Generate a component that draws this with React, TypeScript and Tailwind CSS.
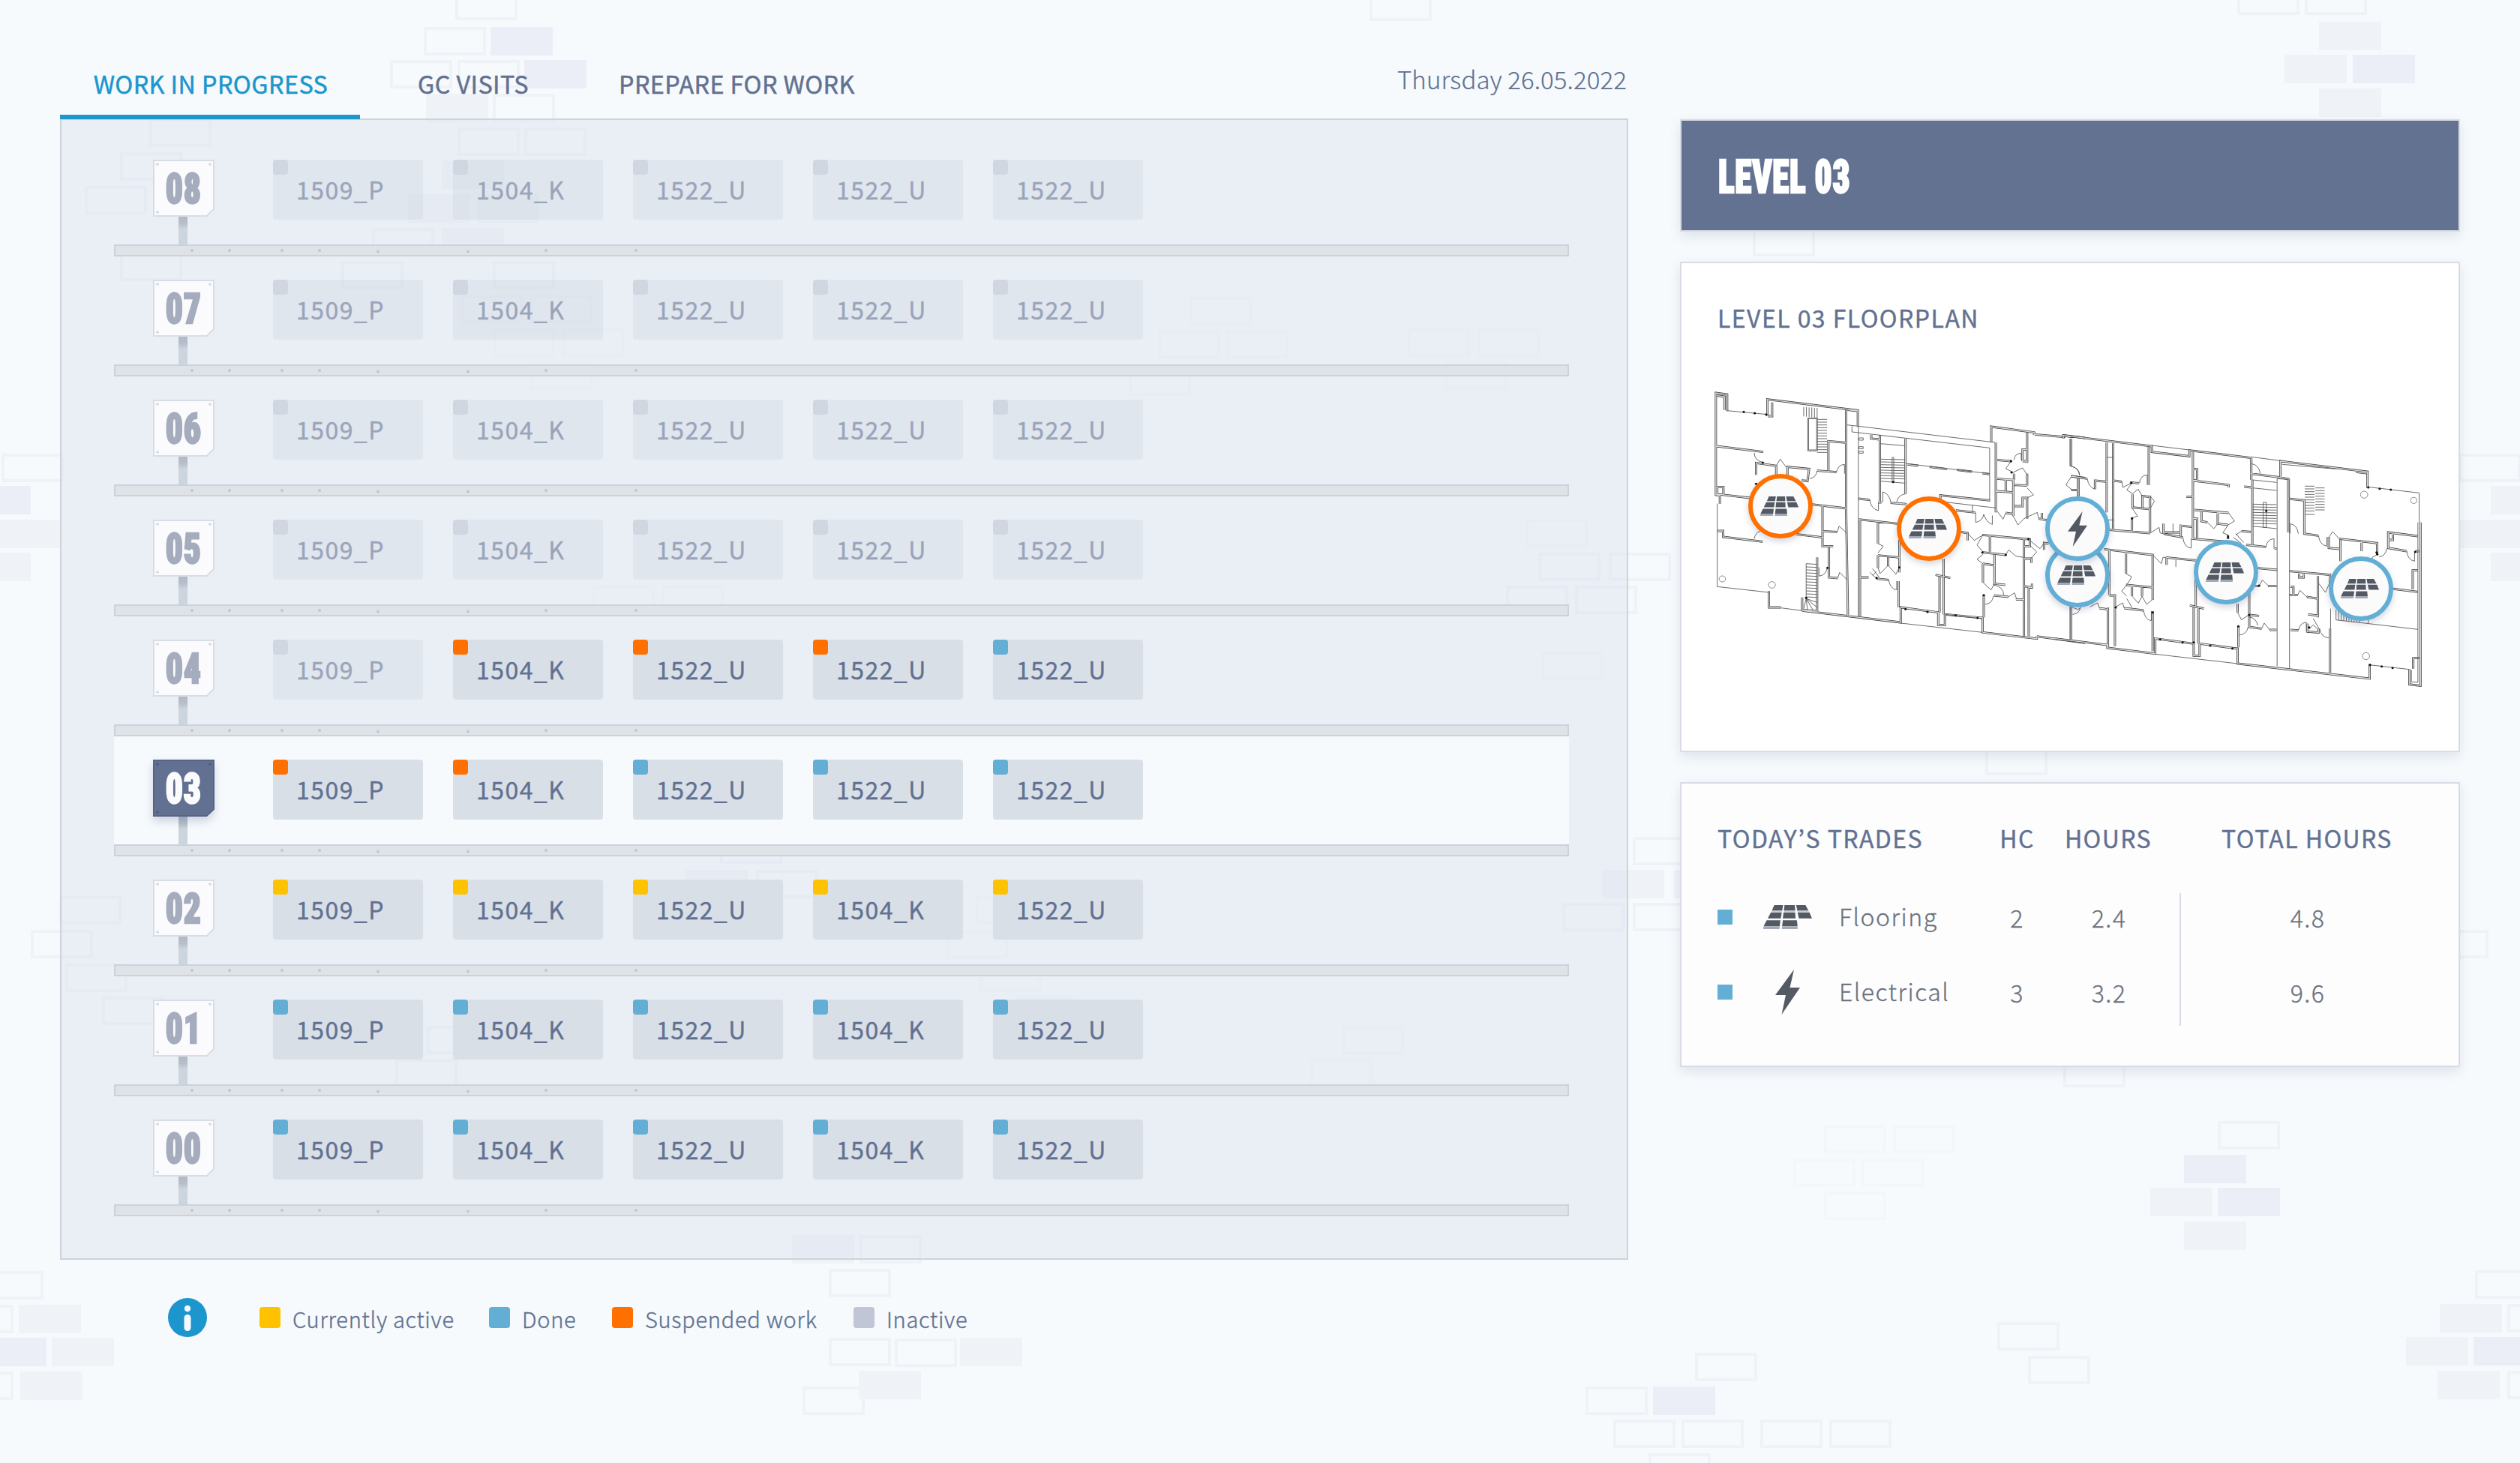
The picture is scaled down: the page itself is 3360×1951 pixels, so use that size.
type BrickKind = "o" | "f" | "g" | "p";

// Decorative brick pattern: kind, x, y
const bricks: [BrickKind, number, number][] = [
  ["o", 607, -11], ["o", 565, 36], ["p", 654, 36], ["o", 520, 80], ["o", 610, 80], ["p", 699, 80],
  ["g", 568, 125], ["o", 657, 125], ["o", 610, 170], ["o", 699, 170],
  ["o", 199, 158], ["o", 160, 203], ["o", 113, 248], ["g", 589, 214], ["g", 544, 259], ["g", 636, 259],
  ["o", 496, 304], ["g", 589, 304], ["o", 160, 337], ["o", 455, 348], ["o", 657, 348],
  ["f", 614, 393], ["f", 707, 393], ["f", 657, 438], ["f", 749, 438], ["f", 707, 482],
  ["f", 1586, 396], ["f", 1544, 440], ["f", 1635, 440], ["f", 1505, 490],
  ["f", 1877, 438], ["f", 1970, 438], ["f", 1927, 482], ["o", 1826, -10],
  ["o", 2983, -18], ["o", 3073, -18], ["g", 3092, 29], ["g", 3046, 73], ["p", 3137, 73], ["g", 3092, 118],
  ["o", 2337, 304], ["o", 2647, 996],
  ["o", 2, 605], ["p", -42, 648], ["g", -2, 693], ["g", -42, 737],
  ["o", 3278, 605], ["g", 3321, 648], ["g", 3278, 693], ["g", 3321, 737],
  ["f", 2034, 692], ["o", 2051, 737], ["o", 2145, 737], ["o", 2008, 781], ["o", 2100, 781],
  ["f", 790, 781], ["f", 882, 781], ["f", 2055, 869],
  ["o", 2177, 1116], ["g", 2136, 1160], ["g", 2232, 1160], ["o", 2083, 1204], ["o", 2177, 1204], ["o", 3235, 1240],
  ["o", 79, 1195], ["o", 41, 1240], ["o", 87, 1285], ["o", 136, 1329],
  ["o", 960, 1114], ["g", 914, 1160], ["o", 1008, 1160], ["f", 1301, 1195], ["f", 1261, 1240],
  ["f", 1306, 1285], ["f", 1354, 1329], ["o", 569, 1368], ["o", 527, 1412],
  ["f", 1789, 1368], ["f", 1747, 1412], ["g", 1056, 1647], ["o", 1146, 1647], ["o", 1105, 1692],
  ["o", 1105, 1784], ["o", 1193, 1785], ["g", 1280, 1784], ["g", 1145, 1828], ["o", 1070, 1849],
  ["o", -25, 1695], ["o", -65, 1740], ["g", 25, 1740], ["p", -21, 1784], ["g", 69, 1784],
  ["o", -65, 1829], ["g", 27, 1829],
  ["o", 2751, 1412], ["f", 2432, 1500], ["f", 2524, 1500], ["f", 2391, 1545], ["f", 2482, 1545], ["f", 2432, 1589],
  ["o", 2957, 1495], ["p", 2912, 1540], ["g", 2867, 1584], ["p", 2957, 1584], ["g", 2912, 1629],
  ["o", 2663, 1763], ["o", 2704, 1808], ["o", 2260, 1804], ["o", 2114, 1849], ["p", 2204, 1849],
  ["o", 2151, 1893], ["o", 2242, 1893], ["o", 2347, 1893], ["o", 2439, 1893], ["o", 2198, 1938],
  ["o", 3300, 1694], ["g", 3253, 1739], ["o", 3343, 1739], ["g", 3208, 1783], ["p", 3298, 1783],
  ["g", 3250, 1828], ["o", 3343, 1828],
];

function Bricks() {
  return (
    <svg className="absolute inset-0" width="3360" height="1951" viewBox="0 0 3360 1951">
      {bricks.map(([k, x, y], i) =>
        k === "o" || k === "f" ? (
          <rect key={i} x={x + 2} y={y + 2} width="79" height="34" fill="none" stroke={k === "o" ? "#eff3f7" : "#f3f6fa"} strokeWidth="4" />
        ) : (
          <rect key={i} x={x} y={y} width="83" height="38" fill={k === "g" ? "#eff3f7" : "#ebeef7"} />
        )
      )}
    </svg>
  );
}

type Status = "active" | "done" | "suspended" | "off";

const dotColor: Record<Status, string> = {
  active: "bg-[#fec200]",
  done: "bg-[#62aed5]",
  suspended: "bg-[#ff7000]",
  off: "bg-[#d1d7e1]",
};

const N = ["1509_P", "1504_K", "1522_U", "1522_U", "1522_U"];
const M = ["1509_P", "1504_K", "1522_U", "1504_K", "1522_U"];
const all = (s: Status): Status[] => [s, s, s, s, s];

const levels: { id: string; names: string[]; status: Status[] }[] = [
  { id: "08", names: N, status: all("off") },
  { id: "07", names: N, status: all("off") },
  { id: "06", names: N, status: all("off") },
  { id: "05", names: N, status: all("off") },
  { id: "04", names: N, status: ["off", "suspended", "suspended", "suspended", "done"] },
  { id: "03", names: N, status: ["suspended", "suspended", "done", "done", "done"] },
  { id: "02", names: M, status: all("active") },
  { id: "01", names: M, status: all("done") },
  { id: "00", names: M, status: all("done") },
];

function Sign({ id, selected }: { id: string; selected: boolean }) {
  const bolt = selected ? "#4f5d80" : "#d8dce6";
  return (
    <div className="ml-[52px] mt-[31px] flex w-[82px] flex-col items-center">
      <div className="relative flex h-[76px] w-[82px] items-center justify-center">
        <svg
          className={selected ? "absolute inset-0 drop-shadow-[0_6px_6px_rgba(80,90,130,0.25)]" : "absolute inset-0"}
          width="82" height="76" viewBox="0 0 82 76"
        >
          <path d="M1 1H81V66L71.5 75H1Z" fill={selected ? "#627191" : "#fbfbfd"} stroke={selected ? "#56648a" : "#d8dce6"} strokeWidth="2" />
          <circle cx="6" cy="6" r="2" fill={bolt} />
          <circle cx="76" cy="6" r="2" fill={bolt} />
          <circle cx="6" cy="70" r="2" fill={bolt} />
        </svg>
        <span
          className={
            "relative top-px font-[Roboto] text-[56px] leading-[76px] font-black [-webkit-text-stroke:2.5px_currentColor] [font-stretch:75%] scale-x-[0.81] tracking-[1px] " +
            (selected ? "text-[#fbfbfd]" : "text-[#a4acbd]")
          }
        >
          {id}
        </span>
      </div>
      <div className="-ml-[2px] h-[37px] w-[12px] bg-[linear-gradient(#b2b9c5,#b8bfca_25%,#ccd4de_45%)]" />
    </div>
  );
}

function Slab() {
  return (
    <svg className="block" width="1940" height="16" viewBox="0 0 1940 16">
      <rect x="1" y="1" width="1938" height="14" fill="#dfe2e7" stroke="#cbd2dc" strokeWidth="2" />
      {[[104, 8], [154, 8], [224, 8], [274, 8], [352, 9.5], [472, 9.5], [576, 8], [696, 8]].map(([x, y]) => (
        <circle key={x} cx={x} cy={y} r="2" fill="#c2c7cf" />
      ))}
    </svg>
  );
}

function LevelRow({ id, names, status }: (typeof levels)[number]) {
  const selected = id === "03";
  return (
    <div className="w-[1940px]">
      <div className={"flex h-[144px] " + (selected ? "bg-[#f6fafd]" : "")}>
        <Sign id={id} selected={selected} />
        <div className="ml-[78px] mt-[31px] flex gap-[40px]">
          {names.map((n, i) => {
            const off = status[i] === "off";
            return (
              <div key={i} className={"h-[80px] w-[200px] rounded-[4px] " + (off ? "bg-[#c5ccd5]/25" : "bg-[#d9dfe7]")}>
                <div className={"h-[20px] w-[20px] rounded-[4px] " + dotColor[status[i]]} />
                <div
                  className={
                    "-mt-px ml-[31px] text-[32px] leading-[40px] tracking-[1.450px] [-webkit-text-stroke:0.4px_currentColor] " +
                    (off ? "text-[#9aa4ba]" : "text-[#627191]")
                  }
                >
                  {n}
                </div>
              </div>
            );
          })}
        </div>
      </div>
      <Slab />
    </div>
  );
}

function FloorIcon({ className }: { className: string }) {
  return (
    <svg className={className} viewBox="0 0 142 77" preserveAspectRatio="none">
      <g fill="#545a63">
        <path d="M32 0H58L55 18H25ZM62 0H92L93 18H60ZM96 0H123L132 18H99Z" />
        <path d="M22 24H54L51 43H13ZM59 24H93L94 43H57ZM100 24H135L142 43H104Z" />
        <path d="M10 49H50L48 68H1ZM57 49H98L100 68H55Z" />
      </g>
      <path d="M25 18H55L54 24H22ZM60 18H93V24H59ZM99 18H132L135 24H100Z" fill="#c9ccd2" />
      <path d="M1 68H48L47 77H0ZM55 68H100V77H54Z" fill="#a3a9b6" />
    </svg>
  );
}

function Bolt({ className }: { className: string }) {
  return (
    <svg className={className} viewBox="0 0 33 60" preserveAspectRatio="none">
      <path d="M25 0L0 34H14L8.500 60L33 24H19.500Z" fill="#545a63" />
    </svg>
  );
}

// Structural walls, drawn twice to give a hollow double line
const wallsLeft = `
M190 205V132L232 138V205M190 132V540L205 542V575M195 143L222 147V200M382 225V158L720 202V265M400 170V225H385M676 200V592L683 1022M682 200L720 204
M728 640V1025M192 345L367 368M340 460V412L418 424M415 424V470M457 470V428L538 436L532 484L510 482M568 443L610 446V325L676 331M610 446L640 449
M205 538L318 552M548 578L678 594M588 585V745H628M588 685L643 688M612 748V870L645 873M490 697L588 710M197 684H217V708L365 727
M388 925V990L433 990M512 1003L880 1050V990L1020 1010V1060H1045V1018L1186 1032V1090L1388 1115V1106M1025 860V1010M1040 795V1018M1010 860L1065 872
M568 790V1005M512 950V1000L568 1005M802 300V570M898 315V535M770 300V315L802 318M722 555L765 560M797 570H808M842 572L902 577
M724 638L868 655M795 650V735M875 720V850M795 780V832M795 782L875 790M833 790V825M728 870H760M790 875L835 880M872 885V990
M1218 330V267L1378 290V300M1380 298L1490 308V302L1568 312M1028 562V542L1214 562M1235 330V610M1237 400L1292 405M1352 290V412M1335 405V358H1352M1335 405H1352
M1237 475L1300 480V625M1272 480V525M1237 525L1300 530M1303 480V455M1303 500L1352 503M1352 455V503M1303 585H1335V552H1352V635M1272 612L1300 616
M1185 700L1362 718V745H1340V718M1340 745V1105M1358 905V1105M1213 705V770M1187 770L1272 780M1230 780V895L1270 900M1187 815L1230 822M1187 815V890M1340 795H1368V812M1340 905L1370 910V895
M1228 942L1282 948M1310 958H1340M1190 940V1030M1515 315V425M1515 465L1568 472M1543 475V545M1520 520H1543M1515 985V1120M1388 1106L1568 1132M1105 688L1130 693V722M1086 602L1158 610M1407 612V640M1395 635L1425 641M1415 760V732L1432 735
M905 418L945 423M988 428L1053 437M1090 440L1146 447M1185 453L1212 457M195 508H218V538H195Z`;

const thinLeft = `
M536 235V360H566V235ZM533 232V364H569V232Z
M680 260L1232 330M698 265V288L1212 352V562M722 265V1025M1235 592L1040 568M195 575V907L388 930M232 203L382 218M433 992L512 1003M880 1053L1186 1090M902 415L1210 455M805 335L895 343M1148 580V610M1185 1035L1045 1018
M724 312h16v9h-16zM724 347h16v8h-16zM724 365h16v8h-16zM848 390h6v100h-6z
M518 188V226M528 188V227M538 190V228M548 190V229M558 192V230M568 192V232
M568 238H605M568 249H605M568 260H605M568 271H605M568 282H605M568 293H605M568 304H605M568 315H605M568 326H605M568 337H605M568 348H605M568 359H605M568 370H605
M806 397L896 399M806 408L896 410M806 419L896 421M806 430L896 432M806 441L896 443M806 452L896 454M806 463L896 465M806 474L896 476M806 485L896 493
M527 815L568 818M527 828L568 830M527 840L568 842M527 852L568 854M527 864L568 866M527 876L568 878M527 888L568 890M527 900L568 902M527 912L568 914M527 924L568 926M527 936L568 938M527 948L568 950
M527 815V955L568 970M527 955L568 990M527 955L552 1000M527 955L532 1000M527 955L518 995
M333 372Q335 405 367 410M540 475Q565 470 568 443M640 449Q645 420 670 418V455M765 560Q768 595 797 603V570M813 570V528Q838 535 843 570M865 568Q870 540 900 535M575 865Q600 862 607 830M575 865V830M835 880Q840 915 865 920V885
M1195 978Q1222 975 1226 945M1225 900Q1262 905 1265 940M1303 400Q1305 375 1330 373V400M1515 425Q1548 432 1548 462M1160 610V650Q1185 645 1190 618Q1200 650 1222 658V622M333 715Q338 690 355 685
M643 688L650 665L678 692M645 873L652 850L680 880M795 735L815 745L795 772M415 424L430 397L452 428M795 830L803 855L833 822L862 857L875 830M765 850L790 875M775 835L800 870M790 845L775 862
M1292 405L1272 435L1300 450L1335 432L1352 460M1352 512L1376 540L1352 552M1240 605L1262 637L1272 612M1300 625L1318 660L1340 635L1390 610L1395 635M1130 693L1155 722L1187 700L1165 740L1187 768M1187 778L1165 798L1187 815
M1272 780L1283 760L1310 785L1340 790M1365 725L1400 755L1417 730M1365 745L1388 768L1365 795M1187 890L1217 920L1230 895M1282 948L1305 932L1312 955M1515 470L1497 500L1520 520M1515 985Q1550 1010 1552 985`;

const wallsRight = `
M60 308L32 302V315M32 302L375 345V368L520 385V362L760 392M62 315V425M62 465L125 475M90 475V545M62 520H90M200 330V610M225 333V675M363 348V500M228 483L258 487M290 490L325 493M155 517V483L200 487
M300 538V590L368 597V548L338 545V590M298 632V685M368 597V690M212 680L368 693M534 370V715M532 437H550V482H532M508 547H534M536 483L672 500V510
M540 600L672 612M567 602V645L590 650M630 610V655L670 660M535 635H550V712M530 715L665 727M420 655V690L487 690M425 697L495 710M487 705V663L532 668
M760 392V480M764 480V740M757 455L873 470V405L1210 447V512M873 470L903 477V690M732 507L762 510M722 685L762 688M740 740L817 748M850 755H858
M190 757L378 780V960M210 760V942M275 770V855M275 900L378 910M298 905V945M337 910V945M210 942H232V1145M205 990V1150M172 993L205 998M62 985V1120M268 993L343 1002M378 1005V1165
M0 1115L203 1140V1152L388 1175V1115L537 1135M430 790L545 802M432 790V820M545 880V985M537 985V1130M555 990V1135M522 982L577 995M537 1130V1183H560V1135L707 1155V1215L1218 1275V1215
M785 833L860 840M752 930V1070M707 975V1010M710 1065V1150M752 1020L790 1024M750 1068L800 1075M830 1080H858M775 905H790M825 905H858M903 555L965 562V695L1020 703
M1060 708V752L1102 756M1100 715L1247 733V780M1105 720V805M1187 728V765M908 845L1065 860V900M1018 865V1030M912 908H923V940M908 940H940M975 948L1018 955M980 1018L1020 1023M912 1080L943 1082
M978 1055V1087L1020 1090V1075M1065 1075V1250M945 855V870H963V857M1405 705L1290 690V752L1362 765M1290 720H1308V692M1415 650V1303L1372 1298V1238M1385 918V842H1405M1305 915L1405 928M1395 765H1410M1387 1235V1193H1410M1165 448L1207 453`;

const thinRight = `
M1405 650V1290L1380 1288V1240
M375 342L520 360M760 388L873 403M1210 508L1410 532V650M388 1177L707 1215M1215 1055L1405 1078M1218 1220L1372 1238M200 390H225M205 640H228M765 512L858 522M765 480L858 490M860 475V1225M908 477V1235M860 475L903 478M1067 995V1075M468 800V828M457 655V690M880 418L1085 436
M806 570h12v100h-12z
M765 577L858 579M765 588L858 590M765 599L858 601M765 610L858 612M765 621L858 623M765 632L858 634M765 643L858 645M765 654L858 656M765 665L858 675
M967 505H1005M967 516H1005M967 527H1005M967 538H1005M967 549H1005M967 560H1005M967 571H1005M967 582H1005M967 593H1005M967 604H1005M967 618H1005
M1008 512H1044M1008 523H1044M1008 534H1044M1008 545H1044M1008 556H1044M1008 567H1044M1008 578H1044M1008 589H1044M1008 600H1044
M1088 1000V1040M1098 1000V1042M1108 1000V1043M1118 1000V1044M1128 1000V1045M1138 1000V1046M1148 1000V1047M1158 1000V1048M1168 1000V1049M1178 1000V1050M1088 1040L1215 1055M1213 1040V1055
M62 425Q92 432 95 462M125 475Q130 510 155 517M327 493Q330 462 357 460V500M258 483L263 510L300 490L278 520L300 535L322 517L338 545M368 545L385 565L368 595M300 595L320 625L298 632M368 693L403 670L407 692L430 700
M495 710Q500 750 527 753V715M590 650L615 675L630 655M672 612L695 645L670 660L650 692L670 700M690 710L722 735M700 695L730 730M722 685L700 700M817 748Q820 718 848 715V755M760 415Q790 420 795 455M910 655Q938 660 942 695M910 655V695
M1020 703Q1025 740 1052 745V708M1060 710L1075 687L1100 715M1255 788Q1280 785 1284 755M1362 765Q1365 800 1392 805V765M378 780L412 815L418 790L430 790M275 855L297 868L278 900L258 925L278 945M298 945L323 973L337 945L355 978L378 958
M278 955L298 990M268 993L262 972L232 990M343 1002Q348 1040 373 1043V1005M135 988L165 972L172 993M68 1018Q95 1015 98 990M715 1100Q742 1098 748 1068M750 1028Q780 1032 785 1063M800 1075L810 1053L832 1080M790 905L803 880L827 905
M940 940L948 922L978 950M1022 895L1047 930L1062 895M943 1080Q948 1052 973 1050V1087M1000 1035L1022 1075M985 1075L1000 1060L1015 1075M1025 1075Q1030 1110 1060 1112M707 1010L722 1040L750 1020M1245 780L1228 790V800`;

const nodesLeft = [[294, 208], [335, 213], [378, 218], [898, 997], [980, 1008], [1085, 1022], [1167, 1032], [1292, 405], [1294, 450], [1185, 770], [1272, 780], [1190, 941], [790, 872], [875, 830], [340, 496], [365, 411], [607, 832], [1357, 716], [852, 488], [527, 952]];
const nodesRight = [[1213, 510], [1257, 515], [1300, 519], [1220, 1220], [1265, 1226], [1307, 1232], [407, 1118], [494, 1130], [601, 1143], [687, 1154], [670, 705], [670, 712], [1245, 770], [1248, 778], [984, 1070], [295, 492], [298, 634], [710, 1066], [537, 1130], [818, 604], [235, 990], [378, 1010], [790, 903], [1395, 768], [752, 1020]];

function PlanPart({ walls, thin, nodes, circles }: { walls: string; thin: string; nodes: number[][]; circles: number[][] }) {
  return (
    <>
      <path d={walls} stroke="#3a3a3a" strokeWidth="2.900" vectorEffect="non-scaling-stroke" />
      <path d={walls} stroke="#dcdcdc" strokeWidth="1.400" vectorEffect="non-scaling-stroke" />
      <path d={thin} stroke="#5a5a5a" strokeWidth="0.900" vectorEffect="non-scaling-stroke" />
      {circles.map(([x, y, r]) => (
        <circle key={x} cx={x} cy={y} r={r} stroke="#8a8a8a" strokeWidth="1" vectorEffect="non-scaling-stroke" />
      ))}
      {nodes.map(([x, y]) => (
        <circle key={`${x}-${y}`} cx={x} cy={y} r="4.500" fill="#111" />
      ))}
    </>
  );
}

function FloorPlan() {
  return (
    <svg width="960" height="420" viewBox="2280 510 960 420" fill="none">
      <g transform="translate(2220 480) scale(0.35714 0.33333)">
        <PlanPart walls={wallsLeft} thin={thinLeft} nodes={nodesLeft} circles={[[214, 876, 12], [399, 900, 13]]} />
      </g>
      <g transform="translate(2740 480) scale(0.34438 0.33333)">
        <PlanPart walls={wallsRight} thin={thinRight} nodes={nodesRight} circles={[[1197, 539, 14], [1389, 562, 12], [1204, 1185, 14]]} />
      </g>
    </svg>
  );
}

function Pin({ place, tone, bolt }: { place: string; tone: string; bolt?: boolean }) {
  return (
    <div className={"absolute flex h-[86px] w-[86px] items-center justify-center rounded-full border-[6px] bg-[#fbfbfb] shadow-[0_4px_8px_rgba(60,70,110,0.22)] " + place + " " + tone}>
      {bolt ? <Bolt className="h-[47px] w-[26px]" /> : <FloorIcon className="-ml-[4px] h-[26px] w-[51px]" />}
    </div>
  );
}

const trades = [
  { name: "Flooring", hc: "2", hours: "2.4", total: "4.8" },
  { name: "Electrical", hc: "3", hours: "3.2", total: "9.6" },
];

const legend = [
  { label: "Currently active", tone: "bg-[#fec200]", box: "w-[306px]" },
  { label: "Done", tone: "bg-[#62aed5]", box: "w-[164px]" },
  { label: "Suspended work", tone: "bg-[#ff7000]", box: "w-[322px]" },
  { label: "Inactive", tone: "bg-[#c0c6d6]", box: "w-[200px]" },
];

const card = "border-2 border-[#d9dce6] shadow-[0_6px_14px_rgba(98,113,145,0.16)]";
const heading = "tracking-[1.440px] text-[#627191] [-webkit-text-stroke:0.4px_currentColor]";
const tableBody = "mt-[36px] font-light tracking-[1.500px] [-webkit-text-stroke:0.3px_currentColor]";
const tab = "mt-[91px] tracking-[0.450px] [-webkit-text-stroke:0.5px_currentColor]";

export default function App() {
  return (
    <div className="relative h-[1951px] w-[3360px] overflow-hidden bg-[#f6fafd] font-['Noto_Sans_CJK_JP',sans-serif] whitespace-nowrap">
      <Bricks />
      <div className="relative flex gap-[69px] pl-[80px]">
        <main className="w-[2091px]">
          <nav className="flex h-[158px] text-[32px] leading-[40px] text-[#627191]">
            <div className="flex w-[400px] flex-col items-center text-[32.300px] text-[#1c96cd]">
              <span className={tab + " ml-[2px]"}>WORK IN PROGRESS</span>
              <div className="mt-[22px] h-[6px] w-[400px] shrink-0 bg-[#1c96cd]" />
            </div>
            <span className={tab + " ml-[77px] w-[268px] text-[32.300px]"}>GC VISITS</span>
            <span className={tab + " text-[32.300px]"}>PREPARE FOR WORK</span>
            <span className="mt-[85px] mr-[2px] ml-auto text-[33px] font-light tracking-[0.100px] [-webkit-text-stroke:0.2px_currentColor]">
              Thursday 26.05.2022
            </span>
          </nav>

          <section className="h-[1522px] border-2 border-[#ccd3db] bg-[#dce2ee]/45 pt-[22px] pl-[70px]">
            {levels.map((l) => (
              <LevelRow key={l.id} {...l} />
            ))}
          </section>

          <footer className="mt-[51px] flex h-[52px] items-center pl-[144px] text-[29px] leading-[40px] text-[#627191]">
            <svg width="52" height="52" viewBox="0 0 52 52">
              <circle cx="26" cy="26" r="26" fill="#1c96cd" />
              <circle cx="26" cy="14" r="4.200" fill="#f6fafd" />
              <rect x="21.500" y="22" width="9" height="22" rx="4.500" fill="#f6fafd" />
            </svg>
            <div className="ml-[70px] flex">
              {legend.map((l) => (
                <div key={l.label} className={"flex items-center " + l.box}>
                  <div className={"h-[28px] w-[28px] rounded-[4px] " + l.tone} />
                  <span className="mt-[2px] ml-[16px] font-light tracking-[0.720px] [-webkit-text-stroke:0.4px_currentColor]">
                    {l.label}
                  </span>
                </div>
              ))}
            </div>
          </footer>
        </main>

        <aside className="mt-[159px] flex w-[1040px] flex-col gap-[40px]">
          <header className={"flex h-[150px] items-center bg-[#647291] pl-[49px] " + card}>
            <h1 className="mt-[4px] origin-left scale-x-[0.740] font-[Roboto] text-[61px] leading-[76px] font-black tracking-[1px] text-white [-webkit-text-stroke:2.5px_currentColor] [font-stretch:75%]">
              LEVEL 03
            </h1>
          </header>

          <section className={"h-[654px] bg-white px-[38px] pt-[52px] " + card}>
            <h2 className={"pl-[10px] text-[32px] leading-[40px] " + heading}>LEVEL 03 FLOORPLAN</h2>
            <div className="relative mt-[67px] h-[420px] w-[960px]">
              <FloorPlan />
              <Pin place="left-[51px] top-[122px]" tone="border-[#ff7000]" />
              <Pin place="left-[249px] top-[152px]" tone="border-[#ff7000]" />
              <Pin place="left-[447px] top-[214px]" tone="border-[#62aed5]" />
              <Pin place="left-[447px] top-[152px]" tone="border-[#62aed5]" bolt />
              <Pin place="left-[645px] top-[210px]" tone="border-[#62aed5]" />
              <Pin place="left-[825px] top-[232px]" tone="border-[#62aed5]" />
            </div>
          </section>

          <section className={"flex h-[380px] bg-[#fdfdfe] pt-[52px] pl-[48px] text-[32px] leading-[40px] text-[#6b717c] " + card}>
            <div className="w-[616px]">
              <div className={"grid grid-cols-[339px_121px_122px] " + heading}>
                <span>TODAY’S TRADES</span>
                <span className="text-center">HC</span>
                <span className="text-center">HOURS</span>
              </div>
              <div className={tableBody}>
                {trades.map((t, i) => (
                  <div key={t.name} className="grid h-[100px] grid-cols-[339px_121px_124px] items-center">
                    <div className="flex items-center">
                      <div className="h-[20px] w-[20px] bg-[#62aed5]" />
                      <div className="flex w-[142px] justify-center pl-[4px]">
                        {i === 0 ? <FloorIcon className="h-[32px] w-[65px]" /> : <Bolt className="h-[60px] w-[33px]" />}
                      </div>
                      <span className="-mt-[5px]">{t.name}</span>
                    </div>
                    <span className="text-center">{t.hc}</span>
                    <span className="text-center">{t.hours}</span>
                  </div>
                ))}
              </div>
            </div>
            <div className="mt-[94px] h-[177px] w-[2px] bg-[#d9dce6]" />
            <div className="flex w-[338px] flex-col items-center">
              <span className={"-ml-[2px] " + heading}>TOTAL HOURS</span>
              <div className={tableBody}>
                {trades.map((t) => (
                  <div key={t.name} className="flex h-[100px] items-center">{t.total}</div>
                ))}
              </div>
            </div>
          </section>
        </aside>
      </div>
    </div>
  );
}
